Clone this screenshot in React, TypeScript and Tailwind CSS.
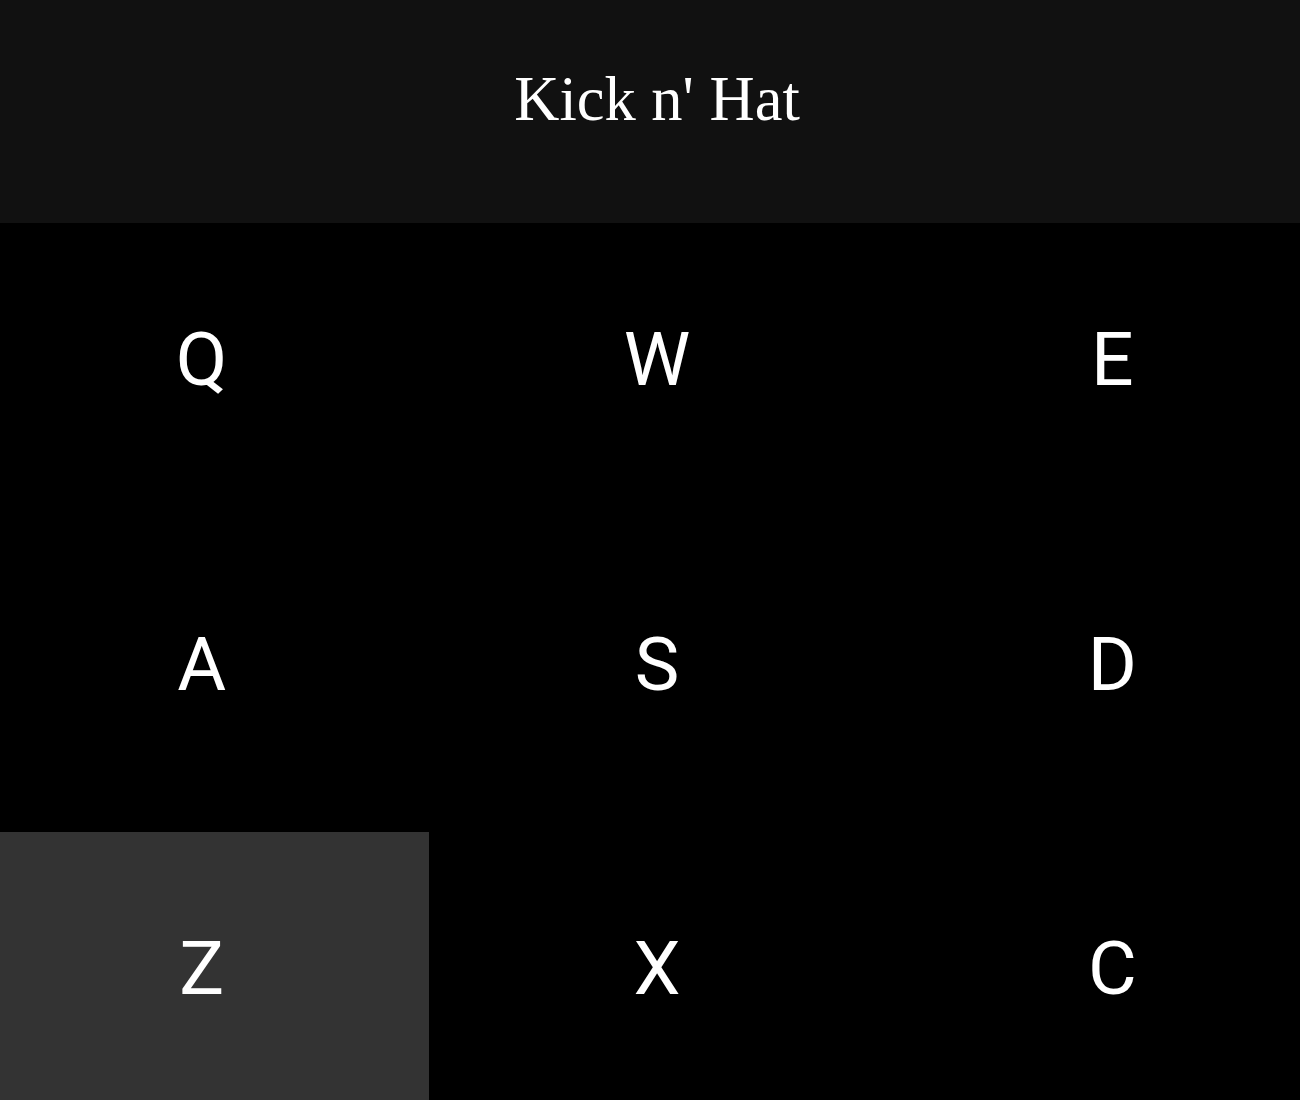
import React from "react";

const keys = ["Q", "W", "E", "A", "S", "D", "Z", "X", "C"];

export default function App() {
  return (
    <div className="w-[1300px] h-[1100px] overflow-hidden bg-black">
      <div className="w-[1366px] -ml-[26px]">
        <header className="h-[223px] bg-[#111111] flex justify-center pt-[68px]">
          <h1 className="text-white text-[62.5px] leading-none font-['Liberation_Serif',serif] font-normal">
            Kick n' Hat
          </h1>
        </header>
        <div className="grid grid-cols-3">
          {keys.map((k) => (
            <div
              key={k}
              className={
                "h-[304.5px] flex items-center justify-center pb-[32px] " +
                (k === "Z" ? "bg-[#333333]" : "bg-black")
              }
            >
              <span className="text-white text-[75px] font-['Roboto',sans-serif] leading-normal">
                {k}
              </span>
            </div>
          ))}
        </div>
      </div>
    </div>
  );
}
